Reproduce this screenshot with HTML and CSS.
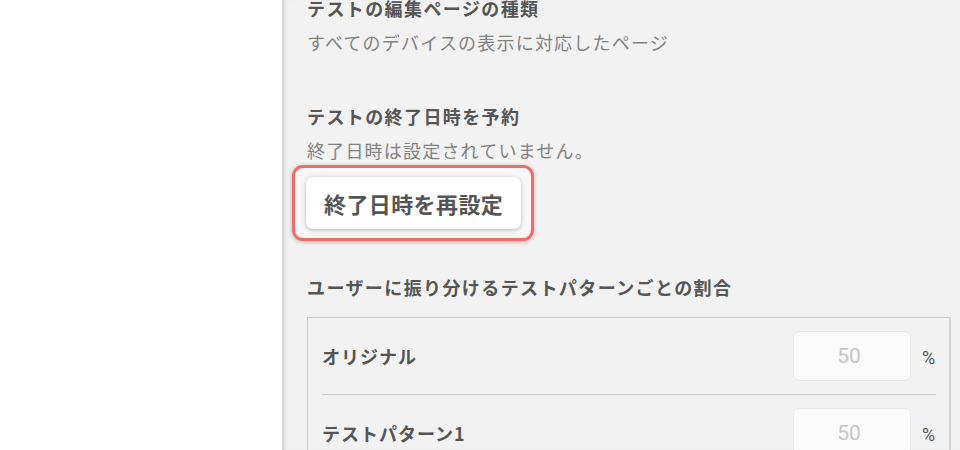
FILE: index.html
```html
<!DOCTYPE html>
<html lang="ja">
<head>
<meta charset="utf-8">
<link rel="stylesheet" href="styles.css">
</head>
<body>
<div class="layout">
  <aside class="sidebar"></aside>
  <main class="panel">
    <section class="field first">
      <h3 class="label">テストの編集ページの種類</h3>
      <p class="desc">すべてのデバイスの表示に対応したページ</p>
    </section>
    <section class="field">
      <h3 class="label">テストの終了日時を予約</h3>
      <p class="desc">終了日時は設定されていません。</p>
      <div class="highlight">
        <button class="btn">終了日時を再設定</button>
      </div>
    </section>
    <section class="field ratio">
      <h3 class="label">ユーザーに振り分けるテストパターンごとの割合</h3>
      <div class="table">
        <div class="row">
          <span class="name">オリジナル</span>
          <span class="input">50</span>
          <span class="unit">%</span>
        </div>
        <div class="row">
          <span class="name">テストパターン1</span>
          <span class="input">50</span>
          <span class="unit">%</span>
        </div>
      </div>
    </section>
  </main>
</div>
</body>
</html>
```
FILE: styles.css
```css
html, body {
  margin: 0;
  padding: 0;
  height: 100%;
  overflow: hidden;
  background: #ffffff;
  font-family: "Noto Sans CJK JP", "Noto Sans", sans-serif;
}
.layout {
  display: flex;
  height: 450px;
}
.sidebar {
  width: 282px;
  flex: none;
  background: #ffffff;
}
.panel {
  flex: 1;
  background: #f2f2f2;
  border-left: 2px solid #d6d6d6;
  box-shadow: inset 3px 0 3px -1px rgba(0,0,0,0.07);
  padding: 0 9px 0 23px;
  overflow: hidden;
}
.field.first {
  margin-top: -5px;
}
.field + .field {
  margin-top: 48px;
}
.field.ratio {
  margin-top: 33px;
}
.label {
  margin: 0;
  font-size: 18px;
  line-height: 26px;
  font-weight: 700;
  letter-spacing: 1.4px;
  color: #555555;
}
.desc {
  margin: 8px 0 0;
  font-size: 18px;
  line-height: 26px;
  font-weight: 400;
  letter-spacing: 1.2px;
  color: #828282;
}
.highlight {
  display: inline-block;
  margin: 2px 0 0 -15px;
  padding: 9px 10px 9px 11px;
  border: 3.5px solid #f26a6a;
  border-radius: 11px;
  background: #f7f7f7;
  box-shadow: 0 1px 4px rgba(0,0,0,0.25);
}
.btn {
  display: block;
  height: 52px;
  padding: 0 18px;
  border: none;
  border-radius: 7px;
  background: #ffffff;
  box-shadow: 0 1px 4px rgba(0,0,0,0.28);
  font-family: "Noto Sans CJK JP", sans-serif;
  font-size: 22px;
  font-weight: 700;
  letter-spacing: 0.4px;
  color: #555555;
}
.table {
  margin-top: 17px;
  border: 1px solid #cccccc;
  border-right: 2px solid #d4d4d4;
}
.row {
  display: flex;
  align-items: center;
  margin: 0 13px 0 14px;
  padding: 13px 0;
  border-bottom: 1px solid #cccccc;
}
.name {
  flex: 1;
  font-size: 18px;
  font-weight: 700;
  letter-spacing: 1px;
  color: #555555;
}
.input {
  width: 118px;
  height: 50px;
  box-sizing: border-box;
  display: flex;
  align-items: center;
  justify-content: center;
  padding-right: 6px;
  background: #fbfbfb;
  border: 1px solid #e8e8e8;
  border-radius: 6px;
  font-family: "Roboto", "Noto Sans", sans-serif;
  font-size: 21px;
  color: #c6c6c6;
}
.unit {
  margin-left: 11px;
  width: 14px;
  padding-top: 2px;
  font-family: "Roboto", "Noto Sans", sans-serif;
  font-size: 18px;
  color: #555555;
}
```
